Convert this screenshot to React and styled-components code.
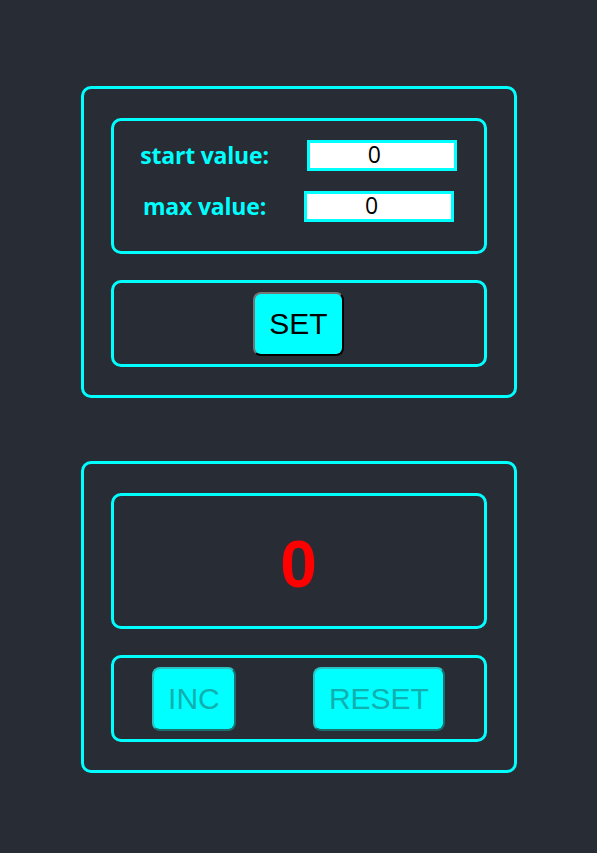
import React, { useState } from 'react';
import styled, { createGlobalStyle } from 'styled-components';

const CYAN = '#00ffff';

const GlobalStyle = createGlobalStyle`
  html, body {
    margin: 0;
    padding: 0;
    background: #282c34;
  }
  body {
    font-family: "Liberation Sans", Arial, sans-serif;
  }
`;

const Page = styled.div`
  min-height: 853px;
  display: flex;
  flex-direction: column;
  align-items: center;
  gap: 63px;
  padding-top: 86px;
  box-sizing: border-box;
`;

const Panel = styled.div`
  width: 436px;
  box-sizing: border-box;
  border: 3px solid ${CYAN};
  border-radius: 10px;
  padding: 29px 27px 28px;
  display: flex;
  flex-direction: column;
  gap: 26px;
`;

const Frame = styled.div`
  box-sizing: border-box;
  border: 3px solid ${CYAN};
  border-radius: 10px;
  height: ${(p) => p.$height}px;
  display: flex;
  align-items: center;
  justify-content: ${(p) => p.$justify || 'center'};
`;

const SettingsFrame = styled(Frame)`
  flex-direction: column;
  align-items: stretch;
  justify-content: flex-start;
  padding-top: 18px;
  gap: 19px;
`;

const Row = styled.div`
  display: flex;
  align-items: center;
  justify-content: center;
  gap: 38px;
`;

const Label = styled.span`
  font-family: "Open Sans", "Noto Sans", sans-serif;
  font-weight: 700;
  font-size: 23px;
  letter-spacing: -0.2px;
  color: ${CYAN};
`;

const NumberInput = styled.input`
  box-sizing: border-box;
  width: 150px;
  height: 31px;
  border: 3px solid ${CYAN};
  background: #fff;
  color: #000;
  text-align: center;
  font-family: "Open Sans", "Noto Sans", sans-serif;
  font-size: 23px;
  line-height: 25px;
  padding: 0 0 2px;
  outline: none;
`;

const Button = styled.button`
  box-sizing: border-box;
  height: 64px;
  padding: 0 14px;
  border-radius: 8px;
  border: 2px outset ${(p) => (p.disabled ? '#2bc4c4' : '#222')};
  background: ${CYAN};
  color: ${(p) => (p.disabled ? '#10b0b0' : '#000')};
  font-family: "Liberation Sans", Arial, sans-serif;
  font-size: 30px;
  line-height: 34px;
`;

const Count = styled.span`
  font-family: "Liberation Sans", Arial, sans-serif;
  font-weight: 700;
  font-size: 66px;
  color: #ff0000;
  margin-top: 6px;
`;

export default function App() {
  const [start, setStart] = useState(0);
  const [max, setMax] = useState(0);
  const [count, setCount] = useState(0);

  return (
    <>
      <GlobalStyle />
      <Page>
        <Panel>
          <SettingsFrame $height={136}>
            <Row>
              <Label>start value:</Label>
              <NumberInput type="number" value={start} onChange={(e) => setStart(Number(e.target.value))} />
            </Row>
            <Row>
              <Label>max value:</Label>
              <NumberInput type="number" value={max} onChange={(e) => setMax(Number(e.target.value))} />
            </Row>
          </SettingsFrame>
          <Frame $height={87}>
            <Button onClick={() => setCount(start)}>SET</Button>
          </Frame>
        </Panel>
        <Panel>
          <Frame $height={136}>
            <Count>{count}</Count>
          </Frame>
          <Frame $height={87} $justify="space-around">
            <Button disabled={count >= max} onClick={() => setCount(count + 1)}>INC</Button>
            <Button disabled={count === start} onClick={() => setCount(start)}>RESET</Button>
          </Frame>
        </Panel>
      </Page>
    </>
  );
}
